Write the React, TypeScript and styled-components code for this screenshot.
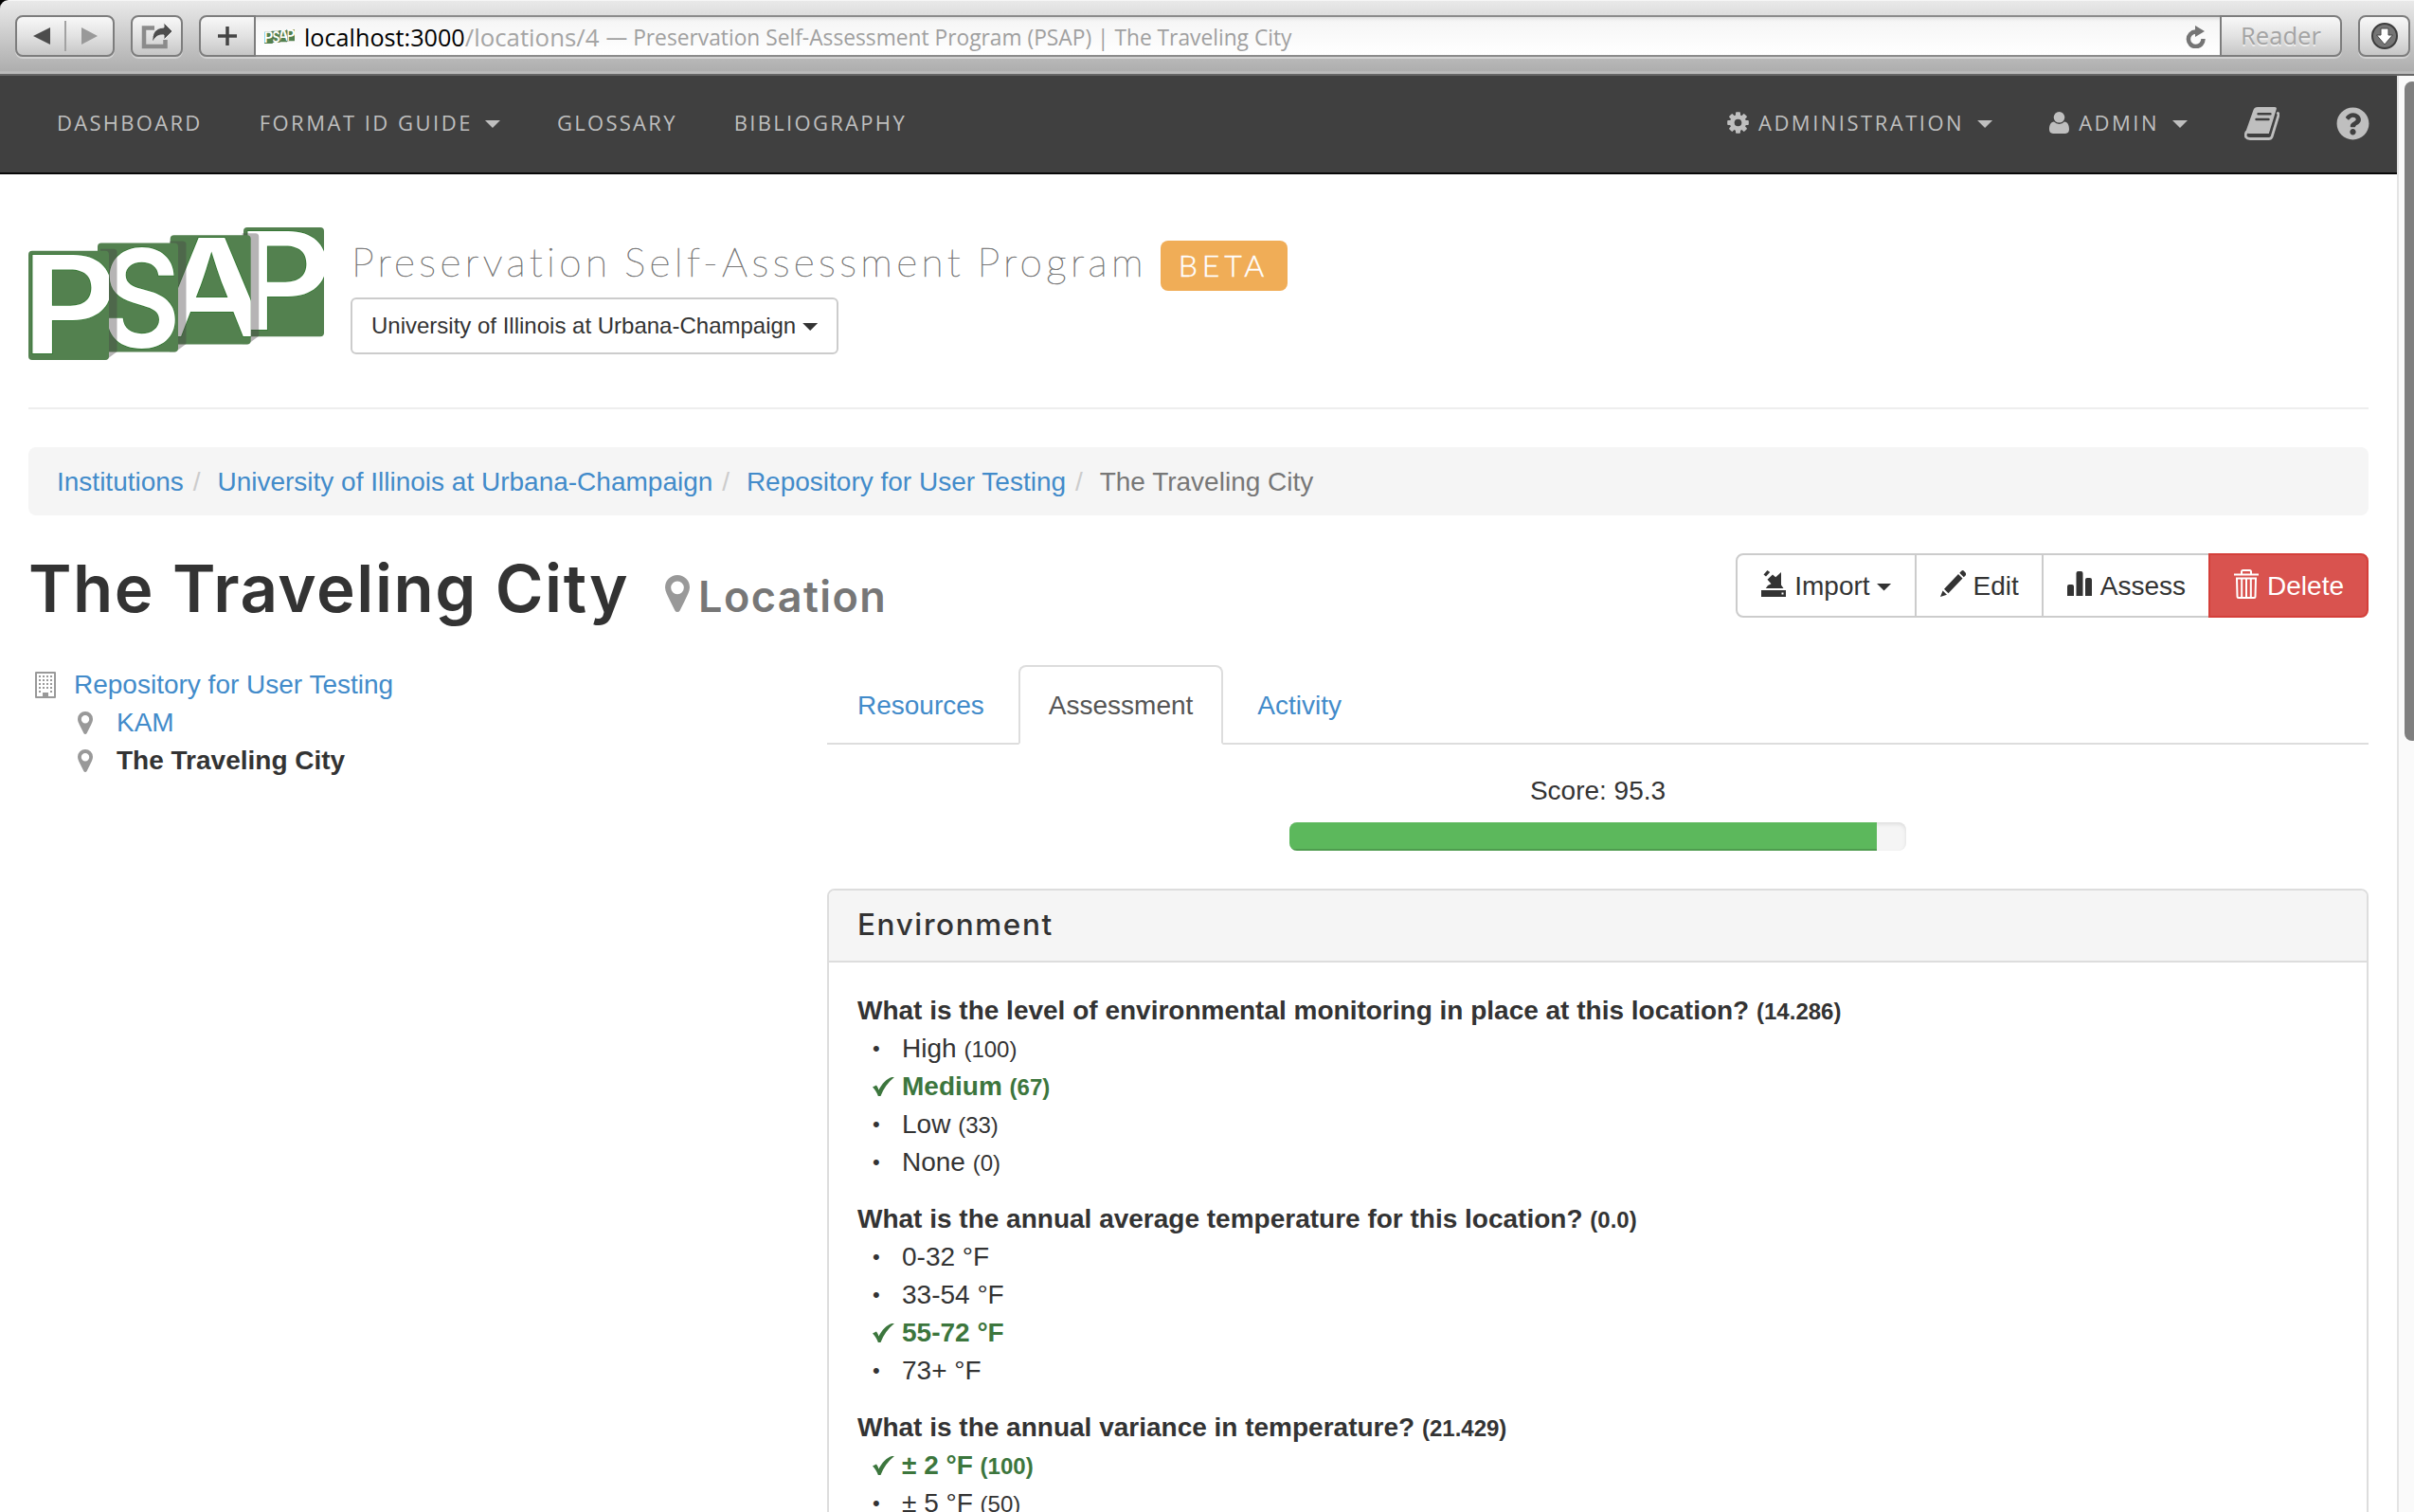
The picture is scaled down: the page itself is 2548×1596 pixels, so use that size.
import React from "react";
import styled, { createGlobalStyle, css } from "styled-components";
import { FaQuestionCircle } from "react-icons/fa";

const GlobalStyle = createGlobalStyle`
  * { box-sizing: border-box; }
  body {
    margin: 0;
    background: #fff;
    color: #333;
    font: 28px/40px "Liberation Sans", Arial, sans-serif;
    overflow: hidden;
  }
`;

const humanist = '"Open Sans", "Noto Sans", sans-serif';
const geometric = 'Inter, sans-serif';

/* ---------- window and browser toolbar ---------- */

const Window = styled.div`
  display: flex;
  flex-direction: column;
  height: 1596px;
  overflow: hidden;
  background: #000;
`;

const Toolbar = styled.div`
  display: flex;
  flex: none;
  gap: 17px;
  height: 80px;
  padding: 16px 4px 0 16px;
  border-top: 1px solid #f6f6f6;
  border-bottom: 2px solid #666;
  border-top-left-radius: 9px;
  background: linear-gradient(#e9e9e9, #dcdcdc 22%, #b9b9b9 77%, #aeaeae 96%, #bbb 97%);
`;

const chromeFace = css`
  display: flex;
  align-items: center;
  justify-content: center;
  height: 44px;
  border: 2px solid #7d7d7d;
  background: linear-gradient(#f8f8f8, #e2e2e2 50%, #c6c6c6);
`;

const ChromeButton = styled.div<{ $width: number }>`
  ${chromeFace}
  width: ${(p) => p.$width}px;
  border-radius: 8px;
  margin-top: -1px;
  box-shadow: 0 2px 0 rgba(255, 255, 255, 0.35);
`;

const Divider = styled.span`
  width: 2px;
  height: 32px;
  margin: 0 16px 0 15px;
  background: #a2a2a2;
`;

const AddressGroup = styled.div`
  display: flex;
  flex: 1;
  height: 44px;
  margin-top: -1px;
  box-shadow: 0 2px 0 rgba(255, 255, 255, 0.35);
  border-radius: 8px;
`;

const AddBookmark = styled.div`
  ${chromeFace}
  width: 60px;
  border-radius: 8px 0 0 8px;
`;

const ReaderButton = styled.div`
  ${chromeFace}
  width: 129px;
  border-radius: 0 8px 8px 0;
  color: #a4a4a4;
  font: 25.6px/40px ${humanist};
  text-shadow: 0 2px 0 #eee;
`;

const Address = styled.div`
  display: flex;
  flex: 1;
  align-items: center;
  padding: 1px 14px 0 9px;
  border: solid #8b8b8b;
  border-width: 2px 0;
  background: linear-gradient(#e2e2e2, #f6f6f6 12%, #fff);
  white-space: pre;
  font-family: ${humanist};

  svg:last-child { margin-left: auto; }
`;

const Host = styled.span`
  margin-left: 10px;
  color: #000;
  font-size: 25.2px;
`;

const UrlPath = styled.span`
  color: #a5a5a5;
  font-size: 25.8px;
`;

const PageTitle = styled.span`
  margin: 2px 0 0 7px;
  color: #a0a0a0;
  font-size: 22.75px;
`;

/* ---------- page frame ---------- */

const Viewport = styled.div`
  display: flex;
  flex: 1;
  min-height: 0;
  background: #fff;
`;

const Page = styled.div`
  flex: 1;
  min-width: 0;
  overflow: hidden;
`;

const ScrollTrack = styled.div`
  width: 18px;
  padding: 6px 0 0 6px;
  border-left: 2px solid #e4e4e4;
  background: #fafafa;
`;

const ScrollThumb = styled.div`
  width: 16px;
  height: 696px;
  border-radius: 8px;
  background: #7f7f7f;
`;

const Nav = styled.nav`
  display: flex;
  gap: 60px;
  height: 104px;
  padding: 0 29px 2px 60px;
  border-bottom: 2px solid #080808;
  background: #404040;
  color: #bfbfbf;
`;

const NavItem = styled.div<{ $end?: boolean }>`
  display: flex;
  align-items: center;
  margin-left: ${(p) => (p.$end ? "auto" : "0")};
`;

const NavLabel = styled.span<{ $tight?: boolean }>`
  padding-bottom: 3px;
  font: 22px/40px ${humanist};
  letter-spacing: ${(p) => (p.$tight ? 2.3 : 2.5)}px;
  text-transform: uppercase;
`;

const NavIcon = styled.span`
  display: flex;
  margin: 0 10px 2px 0;
`;

const Caret = styled.span<{ $gap: number }>`
  width: 16px;
  height: 8px;
  margin: 2px 0 0 ${(p) => p.$gap}px;
  background: currentColor;
  clip-path: polygon(0 0, 100% 0, 50% 100%);
`;

const Container = styled.main`
  padding: 0 30px;
`;

/* ---------- masthead ---------- */

const Masthead = styled.header`
  display: flex;
  gap: 28px;
  height: 248px;
  padding-top: 56px;
  border-bottom: 2px solid #eee;
`;

const Brand = styled.div`
  padding-top: 14px;
`;

const BrandLine = styled.div`
  display: flex;
  align-items: flex-start;
  height: 60px;
`;

const ProgramName = styled.div`
  padding-left: 1px;
  color: #777;
  font: 100 42.5px/43px Lato, sans-serif;
  letter-spacing: 4.35px;
  word-spacing: -3px;
  white-space: nowrap;
  -webkit-text-stroke: 0.6px #777;
`;

const BetaBadge = styled.span`
  width: 134px;
  height: 53px;
  margin-left: 14px;
  padding-left: 19px;
  border-radius: 8px;
  background: #f0ad57;
  color: #fff;
  font: 300 32px/52px Lato, sans-serif;
  letter-spacing: 4.8px;
  -webkit-text-stroke: 0.4px #fff;
`;

const InstitutionPicker = styled.div`
  display: inline-flex;
  align-items: center;
  height: 60px;
  padding: 0 20px;
  border: 2px solid #ccc;
  border-radius: 6px;
  font-size: 24px;
`;

/* ---------- breadcrumb and heading ---------- */

const Breadcrumb = styled.div`
  display: flex;
  height: 72px;
  margin-top: 40px;
  padding: 17px 30px 15px;
  border-radius: 8px;
  background: #f5f5f5;
  white-space: pre;
`;

const Crumb = styled.span<{ $current?: boolean }>`
  color: ${(p) => (p.$current ? "#777" : "#428bca")};

  &:not(:first-child)::before {
    content: "/\\00a0";
    padding: 0 10px;
    color: #ccc;
  }
`;

const HeadingRow = styled.div`
  display: flex;
  justify-content: space-between;
  height: 158px;
  padding-top: 40px;
`;

const Heading = styled.h1`
  display: flex;
  align-items: baseline;
  margin: 0;
  font: 600 69px/74px ${geometric};
  letter-spacing: 1.5px;
  white-space: nowrap;
`;

const HeadingKind = styled.small`
  display: flex;
  align-items: baseline;
  margin-left: 38px;
  color: #777;
  font-size: 45px;
  letter-spacing: 1.4px;

  svg { margin: 0 9px -3px 0; }
`;

const ButtonGroup = styled.div`
  display: flex;
  height: 68px;
`;

const Action = styled.div<{ $danger?: boolean }>`
  display: flex;
  align-items: center;
  padding: 1px 24px 0;
  border: 2px solid ${(p) => (p.$danger ? "#d43f3a" : "#ccc")};
  background: ${(p) => (p.$danger ? "#d9534f" : "#fff")};
  color: ${(p) => (p.$danger ? "#fff" : "#333")};

  &:not(:first-child) { margin-left: -2px; }
  &:first-child { border-radius: 8px 0 0 8px; }
  &:last-child { border-radius: 0 8px 8px 0; }
`;

const ActionIcon = styled.span`
  display: flex;
  width: 36px;
  padding-left: 1px;
  margin-bottom: 5px;
`;

/* ---------- columns ---------- */

const Columns = styled.div`
  display: grid;
  grid-template-columns: 843px 1627px;
`;

const Tree = styled.div`
  display: flex;
  flex-direction: column;
`;

const TreeItem = styled.div<{ $depth: number; $current?: boolean }>`
  display: flex;
  align-items: center;
  height: 40px;
  padding: 1px 0 0 ${(p) => 7 + p.$depth * 45}px;
  color: ${(p) => (p.$current ? "#333" : "#428bca")};
  font-weight: ${(p) => (p.$current ? 700 : 400)};
`;

const TreeIcon = styled.span`
  display: flex;
  width: 41px;
`;

const Tabs = styled.div`
  display: flex;
  gap: 4px;
  height: 84px;
  border-bottom: 2px solid #ddd;
`;

const Tab = styled.div<{ $active?: boolean }>`
  height: 84px;
  padding: 21px 30px 19px;
  border: 2px solid ${(p) => (p.$active ? "#ddd" : "transparent")};
  border-bottom-color: ${(p) => (p.$active ? "#fff" : "transparent")};
  border-radius: 8px 8px 0 0;
  color: ${(p) => (p.$active ? "#555" : "#428bca")};
`;

const Score = styled.div`
  display: flex;
  flex-direction: column;
  align-items: center;
  gap: 13px;
  height: 152px;
  padding-top: 29px;
`;

const ProgressTrack = styled.div`
  display: flex;
  width: 651px;
  height: 30px;
  overflow: hidden;
  border-radius: 8px;
  background: #f5f5f5;
  box-shadow: inset 0 2px 4px rgba(0, 0, 0, 0.1);
`;

const ProgressBar = styled.div`
  background: #5cb85c;
  box-shadow: inset 0 -2px 0 rgba(0, 0, 0, 0.15);
`;

const Panel = styled.section`
  height: 1000px;
  border: 2px solid #ddd;
  border-radius: 8px;
`;

const PanelHeading = styled.h2`
  height: 76px;
  margin: 0;
  padding-left: 30px;
  border-bottom: 2px solid #ddd;
  border-radius: 6px 6px 0 0;
  background: #f5f5f5;
  font: 550 31.5px/72px ${geometric};
  letter-spacing: 1.6px;
`;

const Questions = styled.div`
  display: flex;
  flex-direction: column;
  gap: 20px;
  padding: 31px 30px;
  white-space: pre;
`;

const Question = styled.div`
  height: 40px;
  font-weight: 700;
`;

const Weight = styled.small`
  font-size: 24px;
  line-height: 1;
`;

const Option = styled.div<{ $chosen?: boolean }>`
  display: flex;
  height: 40px;
  padding-left: 16px;
  color: ${(p) => (p.$chosen ? "#3c763d" : "#333")};
  font-weight: ${(p) => (p.$chosen ? 700 : 400)};
`;

const Marker = styled.span`
  display: flex;
  align-items: center;
  width: 31px;
  padding-bottom: 1px;
  font-size: 22px;
`;

/* ---------- drawings ---------- */

const tileX = [0, 73, 149.7, 227];
const tileY = [24.8, 16.4, 8.2, 0];
const letters = [
  { ch: "P", cx: 43.5, base: 132.5, sx: 1.1 },
  { ch: "S", cx: 119, base: 126, sx: 0.9 },
  { ch: "A", cx: 194, base: 115, sx: 1.17 },
  { ch: "P", cx: 270.5, base: 107.5, sx: 1.1 },
];

const Logo = ({ width = 312, height = 140 }: { width?: number; height?: number }) => (
  <svg width={width} height={height} viewBox="0 0 312 140" preserveAspectRatio="none">
    {[3, 2, 1, 0].map((i) => {
      const x = tileX[i];
      const y = tileY[i];
      const l = letters[i];
      const id = `tile-${i}-${width}`;
      return (
        <g key={i}>
          <clipPath id={id}>
            <rect x={x} y={y} width="85" height="115.2" rx="4" />
          </clipPath>
          {i < 3 && (
            <path
              d={`M${x + 76} ${y - 2} H${x + 90} q3.500 0 3.500 3.500 V${y + 106.5} L${x + 82} ${y + 115} H${x + 76}z`}
              fill="#484446"
              fillOpacity="0.4"
            />
          )}
          <rect x={x} y={y} width="85" height="115.2" rx="4" fill="#53814f" />
          <g clipPath={`url(#${id})`}>
            <text
              transform={`translate(${l.cx} ${l.base}) scale(${l.sx} 1)`}
              textAnchor="middle"
              fontFamily="Inter, sans-serif"
              fontWeight="600"
              fontSize="142.5"
              fill="#fff"
              stroke="#2f762e"
              strokeWidth="1.5"
              paintOrder="stroke"
            >
              {l.ch}
            </text>
          </g>
        </g>
      );
    })}
  </svg>
);

const Pin = ({ size }: { size: number }) => (
  <svg width={size} height={size * 1.5} viewBox="0 0 16 24" fill="#999" fillRule="evenodd">
    <path d="M8 0a8 8 0 0 1 8 8c0 2.600-1.700 5.600-3.400 9l-3 6a1.800 1.800 0 0 1-3.200 0l-3-6C1.700 13.600 0 10.600 0 8a8 8 0 0 1 8-8zm0 4a4.200 4.200 0 1 0 0 8.400A4.200 4.200 0 0 0 8 4z" />
  </svg>
);

const Building = () => (
  <svg width="22" height="28" viewBox="0 0 22 28" fill="#999">
    <path fillRule="evenodd" d="M1 0h20a1 1 0 0 1 1 1v26a1 1 0 0 1-1 1H1a1 1 0 0 1-1-1V1a1 1 0 0 1 1-1zm1 2v24h6v-4h6v4h6V2z" />
    {[4, 8, 12, 16].map((y) =>
      [4, 8, 12, 16].map((x) => <rect key={`${x}-${y}`} x={x} y={y} width="2" height="2" />)
    )}
    <rect x="4" y="20" width="2" height="2" />
    <rect x="16" y="20" width="2" height="2" />
  </svg>
);

const Cog = () => (
  <svg width="23" height="23" viewBox="-12 -12 24 24" fill="currentColor">
    {[0, 45, 90, 135].map((a) => (
      <rect key={a} x="-2.600" y="-11.800" width="5.200" height="23.600" rx="1" transform={`rotate(${a})`} />
    ))}
    <circle r="9" />
    <circle r="4" fill="#404040" />
  </svg>
);

const User = () => (
  <svg width="21" height="23" viewBox="0 0 21 23" fill="currentColor">
    <ellipse cx="10.500" cy="5.800" rx="5.800" ry="5.800" />
    <path d="M5 10.600a7.700 7.700 0 0 0 11 0c3.600.5 5 3.600 5 8 0 2.700-1.300 4.400-4 4.400H4c-2.700 0-4-1.700-4-4.400 0-4.400 1.400-7.500 5-8z" />
  </svg>
);

const Book = () => (
  <svg width="37" height="35" viewBox="0 0 37 35" fill="none">
    <path d="M14 0h18q2.500 0 1.700 2.600L25.800 28H5q-3 0-4-1L9.500 3Q10.500 0 14 0z" fill="currentColor" />
    <path d="M2 26.500c-2 4.500 0 7 4 7h19.500c2 0 3-.7 3.700-2.600L35.700 9.500c.5-1.500.3-2.500-.4-3" stroke="currentColor" strokeWidth="2.800" strokeLinecap="round" />
    <path d="M4.500 29.800h20" stroke="#404040" strokeWidth="1.800" />
    <path d="M14.500 7.200h13M12.500 13h13" stroke="#404040" strokeWidth="2.400" strokeLinecap="round" />
  </svg>
);

const ImportIcon = () => (
  <svg width="26" height="28" viewBox="0 0 26 28" fill="currentColor" fillRule="evenodd">
    <path d="M2.500 4.500 6.500 0 9.200 2 5 6.600zM12 4.500l3.200 2.800L21 2v13.500l2.500 3.500H4.800L7 16l3.500-1.700-4-4.500zM0 21h26v7H0zm21.500 2.500v2h2v-2z" />
  </svg>
);

const PencilIcon = () => (
  <svg width="27" height="28" viewBox="0 0 27 28" fill="currentColor">
    <path d="M22.500.6q1.200-1 2.300 0l2 2.200q1 1.200 0 2.400l-2 2-4.500-4.500zM19 4l4.500 4.500L8.500 24.300 4 19.800zM2.600 21.400l4.400 4.400L0 28z" />
  </svg>
);

const BarsIcon = () => (
  <svg width="26" height="26" viewBox="0 0 26 26" fill="currentColor">
    <path d="M0 26V16q0-2 2-2h3q2 0 2 2v10zM9.500 26V2q0-2 2-2h3q2 0 2 2v24zM19 26V9q0-2 2-2h3q2 0 2 2v17z" />
  </svg>
);

const TrashIcon = () => (
  <svg width="26" height="31" viewBox="0 0 26 31" fill="none" stroke="currentColor" strokeWidth="2">
    <path d="M0 5.500h26M8 5V2.500Q8 1 9.500 1h7Q18 1 18 2.500V5" />
    <path d="M3 9.500h20l-.5 19q0 1.500-1.500 1.500H5q-1.500 0-1.500-1.500zM8.200 10v19M13 10v19M17.800 10v19" />
  </svg>
);

const CheckIcon = () => (
  <svg width="23" height="20" viewBox="0 0 23 20" fill="currentColor">
    <path d="M0 10.500 4 8.500C5.200 10 5.900 11.500 6.400 13.500 10 7 14.500 1.800 20.400 0H23C16.300 5.500 11.600 12 8.500 20H5.900C4.500 16 2.500 13 0 10.500z" />
  </svg>
);

const ShareIcon = () => (
  <svg width="33" height="28" viewBox="0 0 33 28">
    <path d="M14 5.500H3V25h22.500v-7" fill="none" stroke="#8b8b8b" strokeWidth="4.500" />
    <path d="M24 0l9 9-9 9v-5c-6-.5-9 1.500-12 8-1-10 3-15.500 12-16z" fill="#4c4c4c" stroke="#e8e8e8" strokeWidth="1" />
  </svg>
);

const ReloadIcon = () => (
  <svg width="23" height="24" viewBox="0 0 23 24">
    <path d="M11.500 6.500A7.800 7.800 0 1 0 19.500 14" fill="none" stroke="#757575" strokeWidth="4.500" />
    <path d="M11 0 21 6 11 12z" fill="#757575" />
  </svg>
);

const DownloadIcon = () => (
  <svg width="28" height="28" viewBox="0 0 28 28">
    <circle cx="14" cy="14" r="13" fill="#757575" stroke="#3c3c3c" strokeWidth="2" />
    <path d="M10 6h8v7h4.500L14 23l-8.500-10H10z" fill="#fff" stroke="#444" strokeWidth="1" />
  </svg>
);

/* ---------- data ---------- */

type Answer = { label: string; weight?: string; chosen?: boolean };
const questions: { text: string; weight: string; answers: Answer[] }[] = [
  {
    text: "What is the level of environmental monitoring in place at this location?",
    weight: "14.286",
    answers: [
      { label: "High", weight: "100" },
      { label: "Medium", weight: "67", chosen: true },
      { label: "Low", weight: "33" },
      { label: "None", weight: "0" },
    ],
  },
  {
    text: "What is the annual average temperature for this location?",
    weight: "0.0",
    answers: [
      { label: "0-32 °F" },
      { label: "33-54 °F" },
      { label: "55-72 °F", chosen: true },
      { label: "73+ °F" },
    ],
  },
  {
    text: "What is the annual variance in temperature?",
    weight: "21.429",
    answers: [
      { label: "± 2 °F", weight: "100", chosen: true },
      { label: "± 5 °F", weight: "50" },
    ],
  },
];

const score = 95.3;

export default function App() {
  return (
    <Window>
      <GlobalStyle />
      <Toolbar>
        <ChromeButton $width={105}>
          <svg width="18" height="18" viewBox="0 0 18 18"><path d="M0 9 18 0v18z" fill="#4c4c4c" /></svg>
          <Divider />
          <svg width="17" height="18" viewBox="0 0 17 18"><path d="M17 9 0 0v18z" fill="#999" /></svg>
        </ChromeButton>
        <ChromeButton $width={55}><ShareIcon /></ChromeButton>
        <AddressGroup>
          <AddBookmark>
            <svg width="20" height="20" viewBox="0 0 20 20"><path d="M10 0v20M0 10h20" stroke="#444" strokeWidth="3.5" /></svg>
          </AddBookmark>
          <Address>
            <Logo width={32} height={15} />
            <Host>localhost:3000</Host>
            <UrlPath>/locations/4</UrlPath>
            <PageTitle>— Preservation Self-Assessment Program (PSAP) | The Traveling City</PageTitle>
            <ReloadIcon />
          </Address>
          <ReaderButton>Reader</ReaderButton>
        </AddressGroup>
        <ChromeButton $width={55}><DownloadIcon /></ChromeButton>
      </Toolbar>

      <Viewport>
        <Page>
          <Nav>
            <NavItem><NavLabel $tight>Dashboard</NavLabel></NavItem>
            <NavItem><NavLabel>Format ID Guide</NavLabel><Caret $gap={13} /></NavItem>
            <NavItem><NavLabel $tight>Glossary</NavLabel></NavItem>
            <NavItem><NavLabel $tight>Bibliography</NavLabel></NavItem>
            <NavItem $end><NavIcon><Cog /></NavIcon><NavLabel>Administration</NavLabel><Caret $gap={14} /></NavItem>
            <NavItem><NavIcon><User /></NavIcon><NavLabel>Admin</NavLabel><Caret $gap={14} /></NavItem>
            <NavItem><Book /></NavItem>
            <NavItem><FaQuestionCircle size={35} /></NavItem>
          </Nav>

          <Container>
            <Masthead>
              <Logo />
              <Brand>
                <BrandLine>
                  <ProgramName>Preservation Self-Assessment Program</ProgramName>
                  <BetaBadge>BETA</BetaBadge>
                </BrandLine>
                <InstitutionPicker>
                  University of Illinois at Urbana-Champaign
                  <Caret $gap={7} />
                </InstitutionPicker>
              </Brand>
            </Masthead>

            <Breadcrumb>
              <Crumb>Institutions</Crumb>
              <Crumb>University of Illinois at Urbana-Champaign</Crumb>
              <Crumb>Repository for User Testing</Crumb>
              <Crumb $current>The Traveling City</Crumb>
            </Breadcrumb>

            <HeadingRow>
              <Heading>
                The Traveling City
                <HeadingKind><Pin size={26} />Location</HeadingKind>
              </Heading>
              <ButtonGroup>
                <Action><ActionIcon><ImportIcon /></ActionIcon>Import<Caret $gap={7} /></Action>
                <Action><ActionIcon><PencilIcon /></ActionIcon>Edit</Action>
                <Action><ActionIcon><BarsIcon /></ActionIcon>Assess</Action>
                <Action $danger><ActionIcon><TrashIcon /></ActionIcon>Delete</Action>
              </ButtonGroup>
            </HeadingRow>

            <Columns>
              <Tree>
                <TreeItem $depth={0}><TreeIcon><Building /></TreeIcon>Repository for User Testing</TreeItem>
                <TreeItem $depth={1}><TreeIcon><Pin size={16} /></TreeIcon>KAM</TreeItem>
                <TreeItem $depth={1} $current><TreeIcon><Pin size={16} /></TreeIcon>The Traveling City</TreeItem>
              </Tree>
              <div>
                <Tabs>
                  <Tab>Resources</Tab>
                  <Tab $active>Assessment</Tab>
                  <Tab>Activity</Tab>
                </Tabs>
                <Score>
                  Score: {score}
                  <ProgressTrack><ProgressBar style={{ width: `${score}%` }} /></ProgressTrack>
                </Score>
                <Panel>
                  <PanelHeading>Environment</PanelHeading>
                  <Questions>
                    {questions.map((q) => (
                      <div key={q.text}>
                        <Question>{q.text} <Weight>({q.weight})</Weight></Question>
                        {q.answers.map((a) => (
                          <Option key={a.label} $chosen={a.chosen}>
                            <Marker>{a.chosen ? <CheckIcon /> : "•"}</Marker>
                            <span>{a.label}{a.weight && <> <Weight>({a.weight})</Weight></>}</span>
                          </Option>
                        ))}
                      </div>
                    ))}
                  </Questions>
                </Panel>
              </div>
            </Columns>
          </Container>
        </Page>
        <ScrollTrack><ScrollThumb /></ScrollTrack>
      </Viewport>
    </Window>
  );
}
